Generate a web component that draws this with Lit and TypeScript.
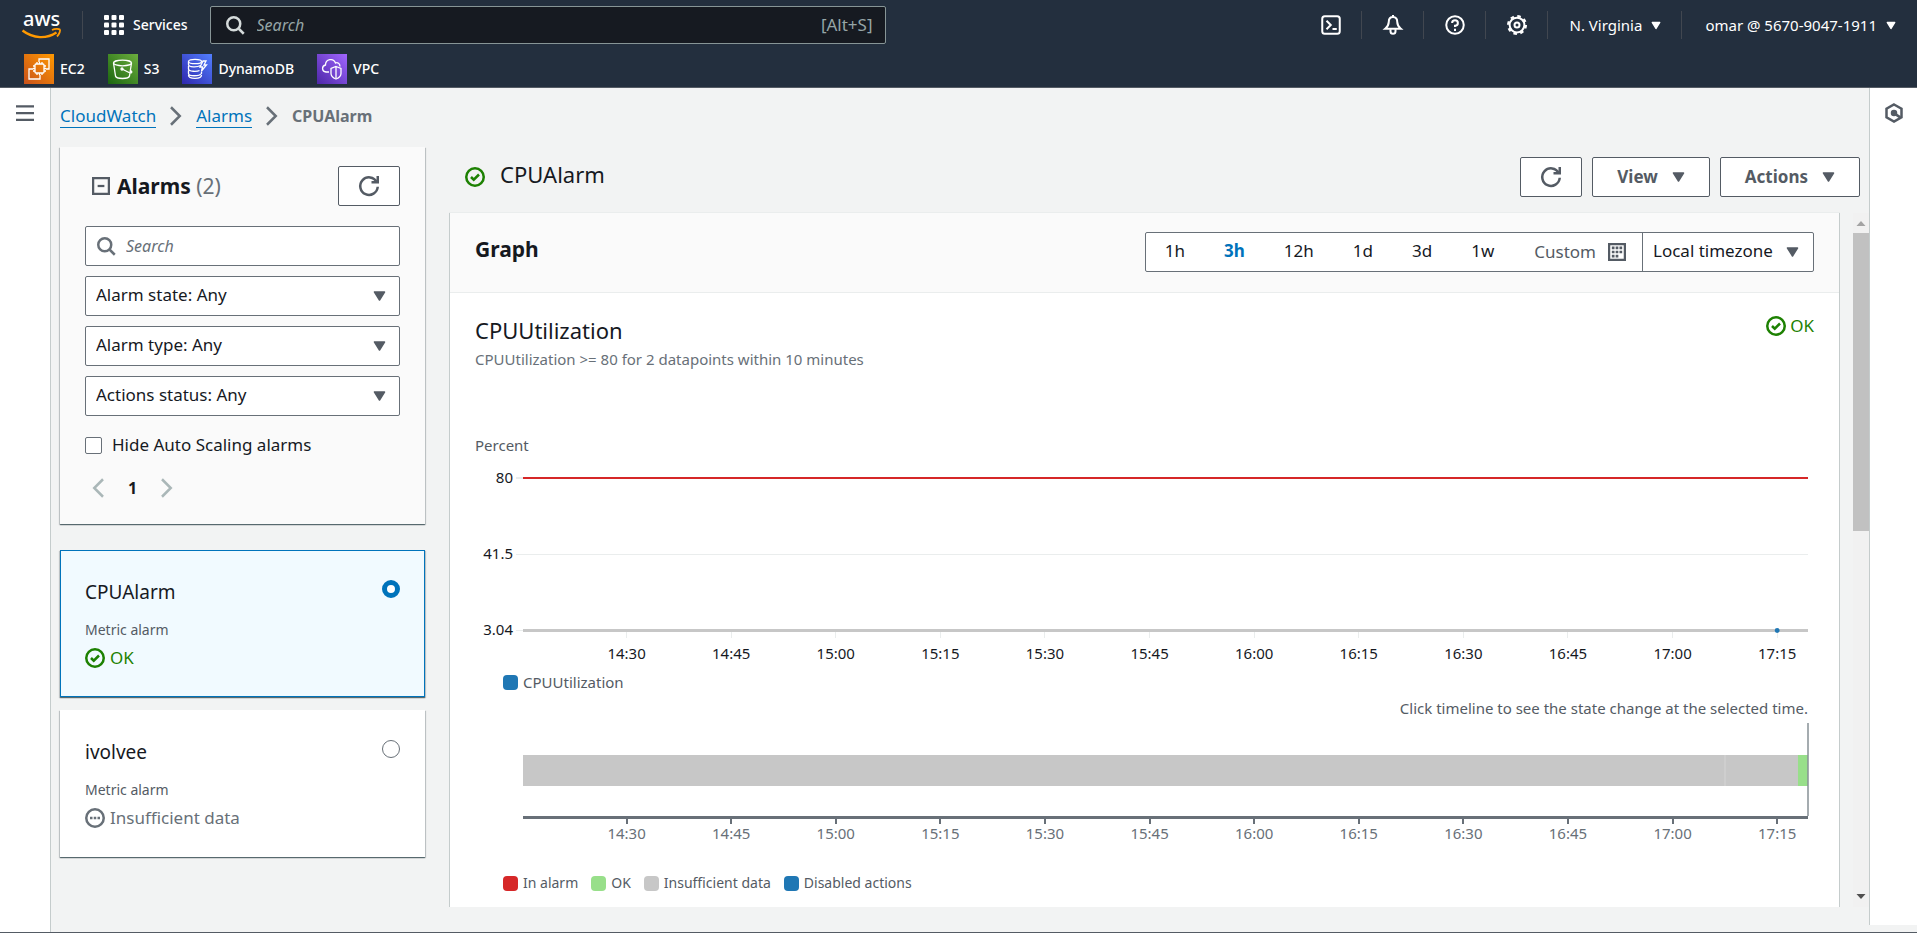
import { LitElement, html, svg, css } from "lit";
import { customElement, state } from "lit/decorators.js";
import { classMap } from "lit/directives/class-map.js";

const icons: Record<string, unknown> = {
  search: svg`<circle cx="7" cy="7" r="5.2"/><path d="m11 11 4 4"/>`,
  refresh: svg`<path stroke-linecap="square" d="M11 5h4V1"/><path d="M15 8.6A7 7 0 1 1 14.2 4.8"/>`,
  ok: svg`<circle cx="8" cy="8" r="7"/><path d="m4.8 8 2.2 2.2 4.2-4.2"/>`,
  pending: svg`<circle cx="8" cy="8" r="7"/><path d="M4 8h2M7 8h2M10 8h2"/>`,
  minus: svg`<path d="M1 1h14v14H1z"/><path d="M5 8h6"/>`,
  left: svg`<path d="M12 1 5 8l7 7"/>`,
  right: svg`<path d="m4 1 7 7-7 7"/>`,
  menu: svg`<path d="M0 2h16M0 8h16M0 14h16"/>`,
  calendar: svg`<path d="M1 1h14v14H1z"/><path stroke-width="2.4" stroke-dasharray="2.4 1" d="M3.4 4.4h9.4M3.4 8h9.4M3.4 11.6h5.8"/>`,
  shell: svg`<rect x="1" y="1" width="14" height="14" rx="2"/><path d="m4.4 4.6 3.4 3.4-3.4 3.4M9.2 11.2h3.4"/>`,
  bell: svg`<path d="M8 1.6c-2.4 0-3.4 1.8-3.4 3.9 0 3-1.2 4-2.9 5.5h12.6c-1.7-1.5-2.9-2.5-2.9-5.5 0-2.1-1-3.9-3.4-3.9zM8 0v2"/><path d="M6 11.4v1.6a2 2 0 0 0 4 0v-1.6"/>`,
  help: svg`<circle cx="8" cy="8" r="7"/><path d="M5.7 6.3A2.3 2.2 0 1 1 8 8.5v1M8 11v1.8"/>`,
  gear: svg`<circle cx="8" cy="8" r="5.9"/><circle cx="8" cy="8" r="7.1" stroke-width="1.8" stroke-dasharray="2.8 2.78"/><circle cx="8" cy="8" r="2"/>`,
  hexagon: svg`<path d="M8 1.2 14 4.5v7L8 14.8 2 11.5v-7z"/><circle cx="8" cy="8" r="1.6" fill="currentColor"/><path d="m8.5 8.500 4.5 3"/>`,
};

const icon = (name: string, size = "") =>
  html`<svg class="icon ${size}" viewBox="0 0 16 16" aria-hidden="true">${icons[name]}</svg>`;

const caret = (size = "") =>
  html`<svg class="caret ${size}" viewBox="0 0 13 10" aria-hidden="true"><path d="M1.5 1h10l-5 8z"/></svg>`;

const iconCss = css`
  .icon { width: 20px; height: 20px; flex: none; display: block; fill: none; stroke: currentColor; stroke-width: 2; overflow: visible; }
  .icon.fine { stroke-width: 1.6; }
  .icon.mid { width: 18px; height: 18px; }
  .caret { width: 13px; height: 10px; flex: none; display: block; fill: currentColor; stroke: currentColor; stroke-width: 1.5; stroke-linejoin: round; }
  .caret.small { width: 10px; height: 9px; }
  button { font: inherit; color: inherit; cursor: pointer; }
  a { color: inherit; text-decoration: none; }
  * { box-sizing: border-box; }
`;

const favourites = [
  { id: "ec2", name: "EC2", from: "#c8511b", to: "#ff9900",
    art: svg`<rect x="11" y="10" width="9" height="9" rx="1"/><path d="M13 8v2M15.5 8v2M18 8v2M13 19v2M15.5 19v2M18 19v2M9 12h2M9 14.5h2M9 17h2M20 12h2M20 14.5h2M20 17h2M15 8V5h10v10h-3M9 15H5v10h11v-4"/>` },
  { id: "s3", name: "S3", from: "#1b660f", to: "#6cae3e",
    art: svg`<ellipse cx="14.5" cy="9" rx="9" ry="2.8"/><path d="m5.5 9 2 13c.3 1.5 3 2.5 7 2.5s6.7-1 7-2.5l2-13M14 15l7 3.5c2.5 1 4-.5 1.5-1.8"/><circle cx="14" cy="15" r="1"/>` },
  { id: "ddb", name: "DynamoDB", from: "#2e27ad", to: "#527fff",
    art: svg`<ellipse cx="13" cy="7.5" rx="6.5" ry="2.2"/><path d="M6.5 7.5v3c0 3 9 2.8 12 1M6.5 12v3c0 3 9 2.5 11 1.5M6.5 16.5v3c0 3 11 3 13 0v-2M6.5 21c0 4.5 13 4.5 13 0M21 7l-3 6h2.5l-1 4 5-6H22l2-4z"/>` },
  { id: "vpc", name: "VPC", from: "#4d27a8", to: "#a166ff",
    art: svg`<path d="M12 18H9c-4.5-.5-4.5-6-.5-7 0-6 8-7.5 10-2 2-1 4.5.5 4.5 3.5M19 12.5l5 2v5c0 2.5-2.5 4.5-5 5.5-2.5-1-5-3-5-5.5v-5zM19 13v11"/>` },
];

@customElement("top-bar")
class TopBar extends LitElement {
  static styles = [iconCss, css`
    :host { display: block; background: #232f3e; color: #fff; border-bottom: 1px solid #545b64; font-size: 15px; line-height: 20px; }
    .row { display: flex; align-items: center; height: 50px; }
    .row > * { flex: none; }
    .home { padding: 0 19px 0 21px; }
    .logo { display: block; width: 42px; height: 34px; overflow: visible; }
    .logo text { font: 500 20px "Noto Sans", sans-serif; fill: #fff; }
    .divider { width: 1px; height: 28px; background: #414750; }
    .plain { display: flex; align-items: center; gap: 9px; height: 40px; padding: 0 20px 0 21px; border: 0; background: none; }
    .services { padding-right: 22px; font-size: 14px; font-weight: 500; }
    .dots { fill: #fff; stroke: none; }
    .search { display: flex; align-items: center; gap: 10px; width: 676px; max-width: 40vw; height: 38px; padding: 0 12px 0 14px; background: #161a21; border: 1px solid #879596; border-radius: 2px; color: #d5dbdb; }
    .search input { flex: 1; min-width: 0; border: 0; outline: 0; background: none; color: #fff; font: 16px "Noto Sans", sans-serif; }
    .search input::placeholder { font-style: italic; color: #95a5a6; opacity: 1; }
    .hint { font-size: 17px; color: #95a5a6; }
    .space { flex: 1; }
    .account { padding-left: 23px; padding-right: 21px; }
    .favs { display: flex; gap: 23px; padding: 4px 24px 3px; margin: 0; list-style: none; font-size: 14px; font-weight: 500; }
    .favs a { display: flex; align-items: center; gap: 6px; }
    .tile { width: 30px; height: 30px; fill: none; stroke: #fff; stroke-width: 1.3; }
  `];

  render() {
    return html`
      <div class="row">
        <a class="home" href="#" aria-label="AWS home"><svg class="logo" viewBox="0 0 42 34">
          <text x="2" y="18">aws</text>
          <path d="M1.5 22.500c11 8.500 24 8.500 34 2" fill="none" stroke="#ff9900" stroke-width="2.4"/>
          <path d="M31 22c3-1.500 7-1.3 7.8-.5s-.3 4.5-2.8 7" fill="none" stroke="#ff9900" stroke-width="1.8"/>
        </svg></a>
        <span class="divider"></span>
        <button class="plain services">
          <svg class="icon dots" viewBox="0 0 20 20" aria-hidden="true">
            ${[0, 7.5, 15].map((y) => [0, 7.5, 15].map((x) => svg`<rect x=${x} y=${y} width="5" height="5" rx="1"/>`))}
          </svg>Services</button>
        <label class="search">${icon("search")}
          <input type="search" placeholder="Search" aria-label="Search services" /><span class="hint">[Alt+S]</span>
        </label>
        <span class="space"></span>
        ${["shell", "bell", "help", "gear"].map((n) => html`
          <button class="plain" aria-label=${n}>${icon(n, "fine")}</button><span class="divider"></span>`)}
        <button class="plain">N. Virginia ${caret("small")}</button>
        <span class="divider"></span>
        <button class="plain account">omar @ 5670-9047-1911 ${caret("small")}</button>
      </div>
      <ul class="favs">
        ${favourites.map((f) => html`<li><a href="#"><svg class="tile" viewBox="0 0 30 30" aria-hidden="true">
          <defs><linearGradient id=${f.id} x1="0" y1="1" x2="1" y2="0">
            <stop offset="0" stop-color=${f.from} /><stop offset="1" stop-color=${f.to} /></linearGradient></defs>
          <rect width="30" height="30" stroke="none" fill="url(#${f.id})"/>${f.art}</svg>${f.name}</a></li>`)}
      </ul>`;
  }
}

const alarms = [
  { name: "CPUAlarm", status: "ok", label: "OK" },
  { name: "ivolvee", status: "pending", label: "Insufficient data" },
];

@customElement("alarm-list")
class AlarmList extends LitElement {
  @state() selected = "CPUAlarm";
  static styles = [iconCss, css`
    :host { display: block; flex: 0 0 365px; }
    .panel, .card { box-shadow: 0 1px 1px 0 rgba(0, 28, 36, 0.5), 1px 1px 1px 0 rgba(0, 28, 36, 0.15), -1px 1px 1px 0 rgba(0, 28, 36, 0.15); }
    .panel { display: flex; flex-direction: column; gap: 10px; padding: 19px 25px 21px; background: #fafafa; }
    .head { display: flex; align-items: center; gap: 7px; padding: 0 0 10px 7px; color: #545b64; }
    h2 { flex: 1; margin: 0; font-size: 21px; line-height: 28px; color: #16191f; }
    h2 span { font-weight: 400; color: #687078; }
    .refresh { display: grid; place-items: center; width: 62px; height: 40px; background: #fff; border: 1px solid #545b64; border-radius: 2px; padding: 0; }
    .field { display: flex; align-items: center; gap: 10px; height: 40px; padding: 0 10px; background: #fff; border: 1px solid #687078; border-radius: 2px; color: #687078; }
    .field input { flex: 1; min-width: 0; padding: 0; border: 0; outline: 0; background: none; font: 16px "Noto Sans", sans-serif; }
    .field input::placeholder { font-style: italic; color: #687078; opacity: 1; }
    .pick { display: grid; align-items: center; color: #545b64; }
    .pick > * { grid-area: 1 / 1; }
    .pick select { appearance: none; width: 100%; height: 40px; padding: 0 10px 2px; background: #fff; border: 1px solid #687078; border-radius: 2px; font: inherit; color: #16191f; }
    .pick .caret { justify-self: end; margin-right: 14px; pointer-events: none; }
    .check { display: flex; align-items: center; gap: 10px; margin-top: 7px; line-height: 24px; color: #16191f; }
    .check input { appearance: none; width: 17px; height: 17px; margin: 0; background: #fff; border: 1px solid #687078; border-radius: 2px; }
    .pages { display: flex; align-items: center; gap: 17px; margin-top: 6px; font-size: 16px; font-weight: 700; line-height: 24px; color: #aab7b8; }
    .pages button { display: grid; place-items: center; width: 26px; height: 30px; padding: 0; border: 0; background: none; }
    .pages span { color: #16191f; }
    .cards { display: flex; flex-direction: column; gap: 13px; margin-top: 26px; }
    .card { display: flex; justify-content: space-between; height: 147px; padding: 28px 25px 20px; background: #fff; }
    .card.on { background: #f1faff; outline: 1px solid #0073bb; outline-offset: -1px; }
    .name { display: block; font-size: 19px; line-height: 28px; color: #16191f; }
    .kind { display: block; margin-top: 12px; font-size: 14px; line-height: 24px; color: #545b64; }
    .status { display: flex; align-items: center; gap: 5px; margin-top: 3px; line-height: 26px; color: #687078; }
    .status.ok { color: #1d8102; }
    .card input { appearance: none; flex: none; width: 18px; height: 18px; margin: 2px 0 0; background: #fff; border: 1px solid #687078; border-radius: 50%; }
    .card input:checked { border: 5px solid #0073bb; }
  `];

  render() {
    return html`
      <section class="panel">
        <div class="head">${icon("minus", "mid")}<h2>Alarms <span>(2)</span></h2>
          <button class="refresh" aria-label="Refresh">${icon("refresh")}</button></div>
        <label class="field">${icon("search")}<input type="search" placeholder="Search" aria-label="Search alarms" /></label>
        ${["Alarm state: Any", "Alarm type: Any", "Actions status: Any"].map((t) => html`
          <label class="pick"><select aria-label=${t.split(":")[0]}><option>${t}</option></select>${caret()}</label>`)}
        <label class="check"><input type="checkbox" />Hide Auto Scaling alarms</label>
        <nav class="pages" aria-label="Pages">
          <button aria-label="Previous page">${icon("left")}</button><span>1</span>
          <button aria-label="Next page">${icon("right")}</button>
        </nav>
      </section>
      <div class="cards">
        ${alarms.map((a) => html`
          <label class=${classMap({ card: true, on: a.name === this.selected })}>
            <span><span class="name">${a.name}</span><span class="kind">Metric alarm</span>
              <span class="status ${a.status}">${icon(a.status)}${a.label}</span></span>
            <input type="radio" name="alarm" .checked=${a.name === this.selected} @change=${() => (this.selected = a.name)} />
          </label>`)}
      </div>`;
  }
}

const ticks = ["14:30", "14:45", "15:00", "15:15", "15:30", "15:45", "16:00", "16:15", "16:30", "16:45", "17:00", "17:15"]
  .map((label, i) => ({ label, x: `${(8.06 + i * 8.14).toFixed(2)}%` }));

@customElement("metric-chart")
class MetricChart extends LitElement {
  static styles = css`
    :host { display: block; font-size: 15px; line-height: 20px; color: #545b64; }
    svg { display: block; width: 100%; overflow: visible; }
    text { font: 15px "Noto Sans", sans-serif; }
    .plot { padding: 0 6px 0 48px; }
    .lines { height: 217px; }
    .lines text { fill: #16191f; }
    .grid { stroke: #eaeded; shape-rendering: crispEdges; }
    .limit { stroke: #d62728; stroke-width: 2; }
    .base { stroke: #c7c7c7; stroke-width: 3; }
    .timeline { height: 124px; }
    .timeline text { fill: #687078; }
    .axis { stroke: #687078; stroke-width: 3; }
    .mark { stroke: #687078; stroke-width: 2; shape-rendering: crispEdges; }
    .legend { display: flex; gap: 13px; padding-left: 28px; margin: 0; list-style: none; }
    .legend li { display: flex; align-items: center; gap: 5px; }
    .swatch { width: 15px; height: 15px; border-radius: 4px; }
    .cpu { background: #1f77b4; } .alarm { background: #d62728; } .ok { background: #98df8a; } .none { background: #c7c7c7; }
    .note { margin: 6px 6px 0 0; text-align: right; }
    .states { margin-top: 31px; font-size: 14px; }
  `;

  render() {
    return html`
      <div>Percent</div>
      <div class="plot">
        <svg class="lines" role="img" aria-label="CPUUtilization in percent">
          <line class="grid" x1="-7" x2="0" y1="23" y2="23" stroke-width="2"/>
          <line class="grid" x1="-7" x2="100%" y1="99.5" y2="99.5"/>
          <line class="grid" x1="-7" x2="0" y1="175.5" y2="175.5"/>
          <text x="-10" y="28" text-anchor="end">80</text>
          <text x="-10" y="104" text-anchor="end">41.5</text>
          <text x="-10" y="180" text-anchor="end">3.04</text>
          ${ticks.map((t) => svg`<line class="grid" x1=${t.x} x2=${t.x} y1="176" y2="183"/>
            <text x=${t.x} y="204" text-anchor="middle">${t.label}</text>`)}
          <line class="limit" x1="0" x2="100%" y1="23" y2="23"/>
          <line class="base" x1="0" x2="100%" y1="175.5" y2="175.5"/>
          <circle cx="97.6%" cy="175.5" r="2.4" fill="#1f77b4"/>
        </svg>
      </div>
      <ul class="legend"><li><span class="swatch cpu"></span>CPUUtilization</li></ul>
      <p class="note">Click timeline to see the state change at the selected time.</p>
      <div class="plot">
        <svg class="timeline" role="img" aria-label="Alarm state timeline">
          <rect x="0" y="37" width="100%" height="31" fill="#c7c7c7"/>
          <line x1="93.54%" x2="93.54%" y1="37" y2="68" stroke="#d5d5d5"/>
          <rect x="99.22%" y="37" width="0.78%" height="31" fill="#98df8a"/>
          <line x1="100%" x2="100%" y1="5" y2="98" stroke="#879196" stroke-width="1.5"/>
          <line class="axis" x1="0" x2="100%" y1="99.5" y2="99.5"/>
          ${ticks.map((t) => svg`<line class="mark" x1=${t.x} x2=${t.x} y1="100" y2="106"/>
            <text x=${t.x} y="121" text-anchor="middle">${t.label}</text>`)}
        </svg>
      </div>
      <ul class="legend states">
        ${[["alarm", "In alarm"], ["ok", "OK"], ["none", "Insufficient data"], ["cpu", "Disabled actions"]].map(
          ([c, t]) => html`<li><span class="swatch ${c}"></span>${t}</li>`)}
      </ul>`;
  }
}

@customElement("alarm-detail")
class AlarmDetail extends LitElement {
  @state() range = "3h";
  static styles = [iconCss, css`
    :host { display: flex; flex-direction: column; flex: 1; min-width: 0; min-height: 0; }
    .title { display: flex; align-items: center; gap: 10px; padding: 10px 9px 16px 16px; }
    h1 { flex: 1; margin: 0 0 6px 5px; font-size: 22px; line-height: 28px; font-weight: 400; }
    .ok { color: #1d8102; }
    .btn { display: flex; align-items: center; justify-content: center; gap: 14px; height: 40px; padding: 0 24px; background: #fff; border: 1px solid #545b64; border-radius: 2px; font-weight: 700; color: #545b64; }
    .btn.square { width: 62px; padding: 0; }
    .scroll { display: flex; flex: 1; min-height: 0; gap: 13px; }
    .view { flex: 1; min-width: 0; overflow: hidden; background: #fff; border: solid #c5cccc; border-width: 0 1px; box-shadow: 0 -1px 0 #eaeded; }
    .bar { display: flex; flex-direction: column; align-items: center; flex: none; width: 16px; background: #f1f1f1; }
    .bar svg { width: 16px; height: 20px; fill: #a3a3a3; }
    .bar .down { fill: #505050; }
    .thumb { width: 16px; flex: 0 0 43%; background: #c1c1c1; }
    .gap { flex: 1; }
    .head { display: flex; align-items: center; justify-content: space-between; padding: 19px 25px 20px; background: #fafafa; border-bottom: 1px solid #eaeded; }
    h2 { margin: 0 0 6px; font-size: 21px; line-height: 28px; }
    .tools { display: flex; height: 40px; border: 1px solid #687078; border-radius: 2px; background: #fff; }
    .tools button { display: flex; align-items: center; gap: 12px; padding: 0 20px 2px 19px; border: 0; background: none; }
    .tools .on { color: #0073bb; font-weight: 700; }
    .tools .custom { color: #545b64; padding: 0 16px 0 20px; border-right: 1px solid #687078; }
    .zone { display: grid; align-items: center; color: #545b64; }
    .zone > * { grid-area: 1 / 1; }
    .zone select { appearance: none; height: 100%; padding: 0 40px 2px 10px; border: 0; background: none; font: inherit; color: #16191f; }
    .zone .caret { justify-self: end; margin-right: 14px; pointer-events: none; }
    .body { padding: 21px 25px; }
    .metric { display: flex; justify-content: space-between; align-items: flex-start; margin-bottom: 66px; }
    h3 { margin: 0; font-size: 22px; line-height: 32px; font-weight: 400; }
    .metric p { margin: 3px 0 0; font-size: 15px; line-height: 20px; color: #687078; }
    .state { display: flex; align-items: center; gap: 4px; line-height: 24px; }
  `];

  render() {
    return html`
      <div class="title"><span class="ok">${icon("ok")}</span><h1>CPUAlarm</h1>
        <button class="btn square" aria-label="Refresh">${icon("refresh")}</button>
        <button class="btn">View ${caret()}</button>
        <button class="btn">Actions ${caret()}</button>
      </div>
      <div class="scroll">
        <section class="view">
          <div class="head"><h2>Graph</h2>
            <div class="tools">
              ${["1h", "3h", "12h", "1d", "3d", "1w"].map((r) => html`
                <button class=${classMap({ on: r === this.range })} @click=${() => (this.range = r)}>${r}</button>`)}
              <button class="custom">Custom ${icon("calendar", "mid")}</button>
              <label class="zone"><select aria-label="Timezone"><option>Local timezone</option></select>${caret()}</label>
            </div>
          </div>
          <div class="body">
            <div class="metric">
              <div><h3>CPUUtilization</h3><p>CPUUtilization &gt;= 80 for 2 datapoints within 10 minutes</p></div>
              <span class="state ok">${icon("ok")}OK</span>
            </div>
            <metric-chart></metric-chart>
          </div>
        </section>
        <div class="bar" aria-hidden="true">
          <svg viewBox="0 0 16 20"><path d="M3.5 13 8 8l4.5 5z"/></svg>
          <span class="thumb"></span><span class="gap"></span>
          <svg class="down" viewBox="0 0 16 20"><path d="M3.5 7 8 12l4.5-5z"/></svg>
        </div>
      </div>`;
  }
}

@customElement("app-root")
class AppRoot extends LitElement {
  static styles = [iconCss, css`
    :host { display: flex; flex-direction: column; height: 100vh; overflow: hidden; background: #f2f3f3; color: #16191f; font: 17px/24px "Noto Sans", sans-serif; border-bottom: 1px solid #545b64; box-sizing: border-box; }
    .frame { display: flex; flex: 1; min-height: 0; }
    .rail { flex: none; display: flex; justify-content: center; align-items: flex-start; background: #fff; color: #545b64; }
    .rail button { padding: 0; border: 0; background: none; }
    .start { width: 51px; padding: 16px 0 0; border-right: 1px solid #c5cccc; }
    .end { width: 48px; margin-bottom: 7px; padding-top: 15px; border-left: 1px solid #c5cccc; }
    .work { flex: 1; min-width: 0; display: flex; flex-direction: column; padding: 16px 0 25px 9px; }
    .crumbs { display: flex; align-items: center; gap: 10px; height: 24px; margin-bottom: 19px; color: #687078; }
    .crumbs a { color: #0073bb; border-bottom: 1px solid #0073bb; line-height: 22px; }
    .crumbs strong { font-size: 16px; }
    .columns { display: flex; gap: 24px; flex: 1; min-height: 0; }
  `];

  render() {
    return html`
      <top-bar></top-bar>
      <div class="frame">
        <div class="rail start"><button aria-label="Open navigation">${icon("menu", "mid")}</button></div>
        <main class="work">
          <nav class="crumbs" aria-label="Breadcrumbs">
            <a href="#">CloudWatch</a>${icon("right")}<a href="#">Alarms</a>${icon("right")}<strong>CPUAlarm</strong>
          </nav>
          <div class="columns"><alarm-list></alarm-list><alarm-detail></alarm-detail></div>
        </main>
        <div class="rail end"><button aria-label="Help panel">${icon("hexagon")}</button></div>
      </div>`;
  }
}
